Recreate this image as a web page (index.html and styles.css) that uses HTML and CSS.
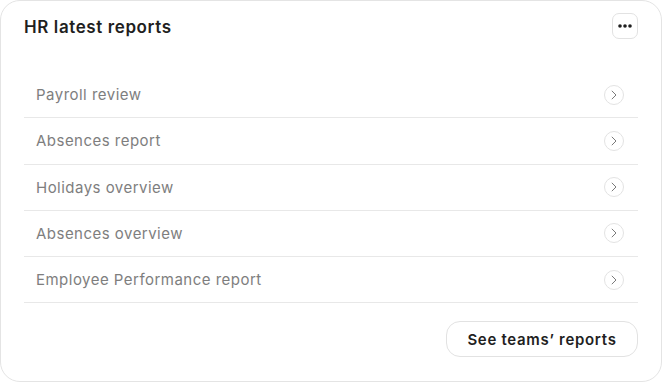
FILE: index.html
```html
<!DOCTYPE html>
<html>
<head>
<meta charset="utf-8">
<link rel="stylesheet" href="styles.css">
</head>
<body>
<div class="card">
  <div class="header">
    <h2 class="title">HR latest reports</h2>
    <button class="more" aria-label="More">
      <svg width="14" height="4" viewBox="0 0 14 4"><circle cx="2" cy="2" r="1.8" fill="#1f1f1f"/><circle cx="7" cy="2" r="1.8" fill="#1f1f1f"/><circle cx="12" cy="2" r="1.8" fill="#1f1f1f"/></svg>
    </button>
  </div>
  <ul class="list">
    <li class="row"><span>Payroll review</span><span class="chev"><svg width="8" height="12" viewBox="0 0 8 12"><path d="M1.8 1.8 L6 6 L1.8 10.2" fill="none" stroke="#7a7a7a" stroke-width="1"/></svg></span></li>
    <li class="row"><span>Absences report</span><span class="chev"><svg width="8" height="12" viewBox="0 0 8 12"><path d="M1.8 1.8 L6 6 L1.8 10.2" fill="none" stroke="#7a7a7a" stroke-width="1"/></svg></span></li>
    <li class="row"><span>Holidays overview</span><span class="chev"><svg width="8" height="12" viewBox="0 0 8 12"><path d="M1.8 1.8 L6 6 L1.8 10.2" fill="none" stroke="#7a7a7a" stroke-width="1"/></svg></span></li>
    <li class="row"><span>Absences overview</span><span class="chev"><svg width="8" height="12" viewBox="0 0 8 12"><path d="M1.8 1.8 L6 6 L1.8 10.2" fill="none" stroke="#7a7a7a" stroke-width="1"/></svg></span></li>
    <li class="row"><span>Employee Performance report</span><span class="chev"><svg width="8" height="12" viewBox="0 0 8 12"><path d="M1.8 1.8 L6 6 L1.8 10.2" fill="none" stroke="#7a7a7a" stroke-width="1"/></svg></span></li>
  </ul>
  <div class="footer">
    <button class="cta">See teams’ reports</button>
  </div>
</div>
</body>
</html>
```
FILE: styles.css
```css
* { box-sizing: border-box; }
html, body { margin: 0; padding: 0; background: #ffffff; }
body { font-family: Inter, "Noto Sans", sans-serif; }
.card {
  width: 662px;
  height: 382px;
  border: 1px solid #e4e4e4;
  border-radius: 20px;
  padding: 12px 23px 24px 23px;
  display: flex;
  flex-direction: column;
  background: #fff;
}
.header {
  display: flex;
  justify-content: space-between;
  align-items: center;
  height: 26px;
}
.title {
  margin: 0;
  font-size: 17px;
  font-weight: 600;
  color: #1f1f1f;
  letter-spacing: 0.6px;
  margin-top: 1px;
}
.more {
  width: 26px;
  height: 26px;
  border: 1px solid #e2e2e2;
  border-radius: 7px;
  background: #fff;
  display: flex;
  align-items: center;
  justify-content: center;
  padding: 0;
}
.list {
  list-style: none;
  margin: 33px 0 0 0;
  padding: 0;
}
.row {
  height: 46.25px;
  border-bottom: 1px solid #e8e8e8;
  display: flex;
  align-items: center;
  justify-content: space-between;
  padding: 0 14px 0 12px;
  font-size: 15px;
  letter-spacing: 0.48px;
  color: #7e7e7e;
}
.chev {
  width: 20px;
  height: 20px;
  border: 1px solid #e3e3e3;
  border-radius: 50%;
  display: flex;
  align-items: center;
  justify-content: center;
}
.footer {
  margin-top: auto;
  display: flex;
  justify-content: flex-end;
}
.cta {
  width: 192px;
  height: 36px;
  border: 1px solid #e2e2e2;
  border-radius: 14px;
  background: #fff;
  font-family: Inter, "Noto Sans", sans-serif;
  font-size: 15px;
  font-weight: 600;
  letter-spacing: 0.7px;
  color: #1f1f1f;
  padding: 0;
}
```
